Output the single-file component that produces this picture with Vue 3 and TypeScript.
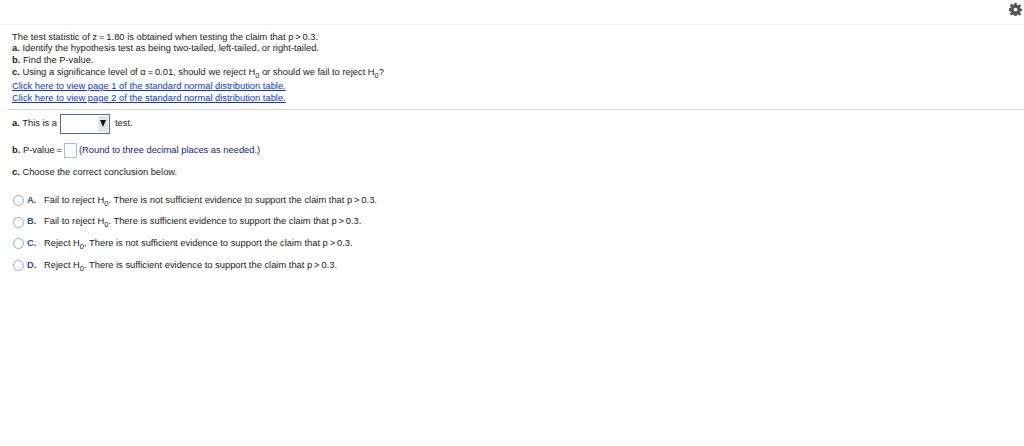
<script setup lang="ts">
const options = [
  { key: 'A', pre: 'Fail to reject H', post: '. There is not sufficient evidence to support the claim that p\u2009>\u20090.3.' },
  { key: 'B', pre: 'Fail to reject H', post: '. There is sufficient evidence to support the claim that p\u2009>\u20090.3.' },
  { key: 'C', pre: 'Reject H', post: '. There is not sufficient evidence to support the claim that p\u2009>\u20090.3.' },
  { key: 'D', pre: 'Reject H', post: '. There is sufficient evidence to support the claim that p\u2009>\u20090.3.' }
]
</script>

<template>
  <div class="page">
    <header class="top">
      <svg class="gear" width="13" height="13" viewBox="0 0 14 14">
        <path fill="#555" fill-rule="evenodd" d="M5.800 0h2.400l.3 2 1.200.5 1.700-1.200 1.700 1.700-1.200 1.700.5 1.200 2 .3v2.400l-2 .3-.5 1.200 1.200 1.700-1.700 1.700-1.700-1.200-1.200.5-.3 2H5.800l-.3-2-1.200-.5-1.700 1.200-1.700-1.700 1.200-1.700-.5-1.200-2-.3V5.800l2-.3.5-1.200L.9 2.600 2.600.9l1.700 1.200 1.200-.5zM7 5a2 2 0 1 0 0 4 2 2 0 0 0 0-4z" />
      </svg>
    </header>
    <section class="question">
      <div>The test statistic of z&#8201;=&#8201;1.80 is obtained when testing the claim that p&#8201;&gt;&#8201;0.3.</div>
      <div><b>a.</b> Identify the hypothesis test as being two-tailed, left-tailed, or right-tailed.</div>
      <div><b>b.</b> Find the P-value.</div>
      <div><b>c.</b> Using a significance level of α&#8201;=&#8201;0.01, should we reject H<sub>0</sub> or should we fail to reject H<sub>0</sub>?</div>
      <div class="links">
        <a>Click here to view page 1 of the standard normal distribution table.</a>
        <a>Click here to view page 2 of the standard normal distribution table.</a>
      </div>
    </section>
    <section class="answers">
      <div class="row first">
        <span><b>a.</b> This is a</span>
        <span class="select"><span class="arrow"></span></span>
        <span>test.</span>
      </div>
      <div class="row second">
        <span><b>b.</b> P-value&#8201;=</span>
        <span class="input"></span>
        <span class="hint">(Round to three decimal places as needed.)</span>
      </div>
      <div class="third"><b>c.</b> Choose the correct conclusion below.</div>
      <ul class="options">
        <li v-for="o in options" :key="o.key">
          <span class="radio"></span>
          <b class="key">{{ o.key }}.</b>
          <span>{{ o.pre }}<sub>0</sub>{{ o.post }}</span>
        </li>
      </ul>
    </section>
  </div>
</template>

<style>
html, body { background: #fff; }
</style>

<style scoped>
.page {
  width: 1024px;
  height: 446px;
  overflow: hidden;
  background: #fff;
  color: #222;
  font-family: "Liberation Sans", Arial, sans-serif;
  font-size: 9.35px;
  line-height: 11.7px;
}
.top {
  height: 24px;
  border-bottom: 1px solid #f1f1f1;
  display: flex;
  justify-content: flex-end;
  padding-right: 2px;
}
.gear { margin-top: 3px; }
.question {
  margin-left: 7px;
  padding: 6.500px 5px 0;
  height: 77.500px;
  border-bottom: 1px solid #d3d5e2;
}
sub {
  font-size: 7.500px;
  line-height: 0;
  vertical-align: -3px;
}
.links { margin-top: 3px; }
.links a {
  display: block;
  color: #0d34e0;
  text-decoration: underline;
}
.answers { padding: 0 12px; }
.row { display: flex; align-items: center; }
.first { margin-top: 4px; height: 20px; }
.select {
  width: 50px;
  height: 20px;
  margin: 0 5px 0 3px;
  box-sizing: border-box;
  border: 1px solid #3a6fc0;
  display: flex;
  justify-content: flex-end;
  background: #fff;
}
.arrow {
  width: 10px;
  margin: 1px;
  background: #e4e4e4;
  position: relative;
}
.arrow::after {
  content: "";
  position: absolute;
  left: 1.500px;
  top: 4px;
  border-left: 3.500px solid transparent;
  border-right: 3.500px solid transparent;
  border-top: 7px solid #111;
}
.second { margin-top: 9px; height: 15px; }
.input {
  width: 13px;
  height: 15px;
  box-sizing: border-box;
  margin: 0 2px 0 2px;
  border: 1px solid #9fc0dc;
}
.hint { color: #1a237e; }
.third { margin-top: 9px; }
.options {
  list-style: none;
  margin: 11px 0 0;
  padding: 0;
}
.options li {
  display: flex;
  align-items: center;
  height: 21.700px;
  color: #222;
}
.radio {
  width: 9px;
  height: 9px;
  border: 1px solid #8aabe0;
  border-radius: 50%;
  margin: 0 3px 0 1px;
  flex: none;
}
.key {
  width: 17px;
  color: #2a4c9c;
}
</style>
